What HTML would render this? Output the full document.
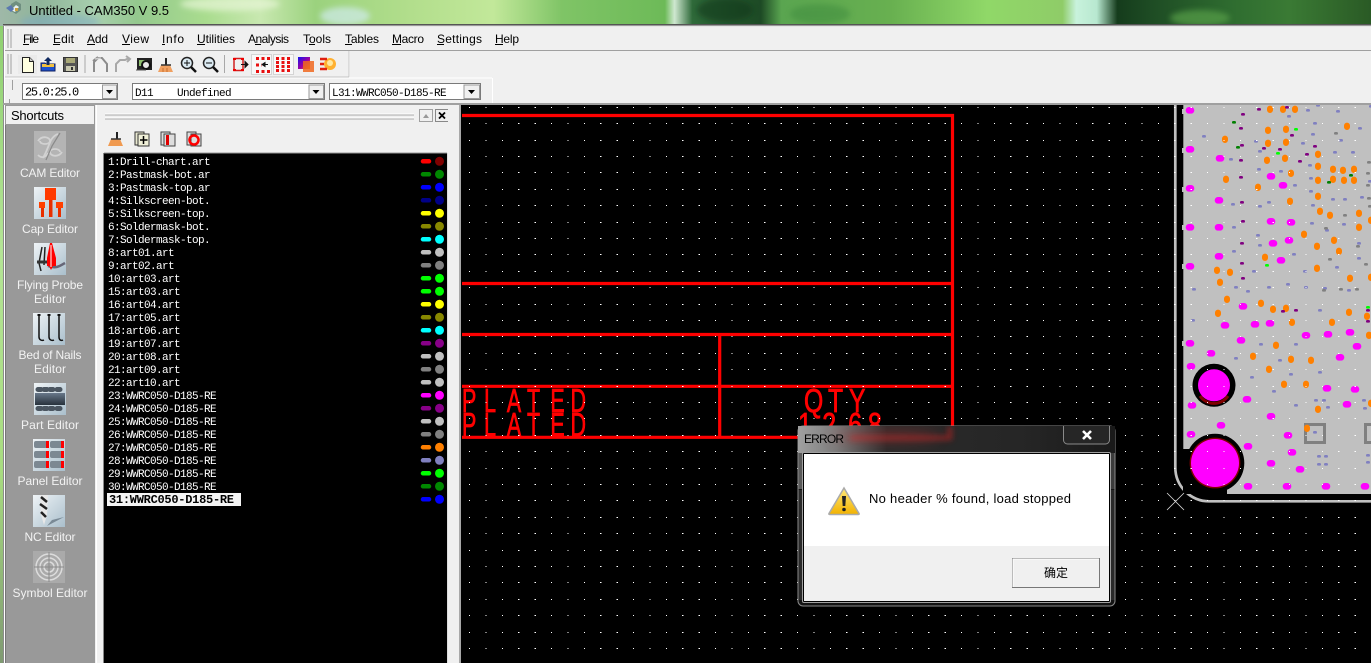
<!DOCTYPE html>
<html lang="en"><head><meta charset="utf-8"><title>Untitled - CAM350 V 9.5</title>
<style>
html,body{margin:0;padding:0;width:1371px;height:663px;overflow:hidden;background:#000}
svg{display:block}
text{font-family:"Liberation Sans","Noto Sans CJK SC",sans-serif;font-size:12px;fill:#000}
.m{font-size:12px}
.l{font-family:"Liberation Mono",monospace;font-size:11px;fill:#fff;letter-spacing:-.6px}
.c{font-family:"Liberation Mono",monospace;font-size:11px;fill:#000;letter-spacing:-.6px}
.s{fill:#f2f2f2;text-anchor:middle;font-size:12px}
.r{font-size:33px;fill:#f00;stroke:#f00;stroke-width:.8px}
</style></head><body>
<svg xmlns="http://www.w3.org/2000/svg" width="1371" height="663" viewBox="0 0 1371 663">
<defs>
<linearGradient id="wp" x1="0" x2="1" y1="0" y2="0">
<stop offset="0" stop-color="#9fb8a8"/><stop offset=".03" stop-color="#8fb59a"/><stop offset=".07" stop-color="#a8cfae"/><stop offset=".1" stop-color="#94c88e"/><stop offset=".15" stop-color="#a9dc8e"/><stop offset=".19" stop-color="#c8e8b0"/><stop offset=".23" stop-color="#9bd27e"/><stop offset=".3" stop-color="#b2de8c"/><stop offset=".36" stop-color="#c2e89a"/><stop offset=".41" stop-color="#7fc466"/><stop offset=".485" stop-color="#6dba58"/><stop offset=".492" stop-color="#cfe8d0"/><stop offset=".505" stop-color="#2f6a3a"/><stop offset=".555" stop-color="#1d4a25"/><stop offset=".57" stop-color="#5aa550"/><stop offset=".65" stop-color="#68b050"/><stop offset=".72" stop-color="#90d868"/><stop offset=".775" stop-color="#8fcc68"/><stop offset=".785" stop-color="#c8f2dc"/><stop offset=".8" stop-color="#b8e8d0"/><stop offset=".815" stop-color="#153c1c"/><stop offset=".84" stop-color="#1e4c24"/><stop offset=".9" stop-color="#2f6d30"/><stop offset=".94" stop-color="#3a7a34"/><stop offset="1" stop-color="#2a5a25"/>
</linearGradient>
<linearGradient id="ls" x1="0" x2="0" y1="0" y2="1"><stop offset="0" stop-color="#8fd070"/><stop offset=".35" stop-color="#b4e496"/><stop offset=".7" stop-color="#a8dc80"/><stop offset="1" stop-color="#7f9a72"/></linearGradient>
<linearGradient id="ic" x1="0" x2="1" y1="0" y2="1"><stop offset="0" stop-color="#eef3f6"/><stop offset="1" stop-color="#aabfcc"/></linearGradient>
<linearGradient id="gl" x1="0" x2="1" y1="0" y2="0"><stop offset="0" stop-color="#a0a0a0"/><stop offset=".12" stop-color="#7c7c7c"/><stop offset=".28" stop-color="#2a2a2a"/><stop offset=".7" stop-color="#262626"/><stop offset="1" stop-color="#1a1a1a"/></linearGradient>
<linearGradient id="yl" x1="0" x2="0" y1="0" y2="1"><stop offset="0" stop-color="#ffe97a"/><stop offset="1" stop-color="#f2b200"/></linearGradient>
<linearGradient id="gr" x1="0" x2="1" y1="0" y2="1"><stop offset="0" stop-color="#1010f0"/><stop offset=".55" stop-color="#a000a0"/><stop offset="1" stop-color="#ff8000"/></linearGradient>
<linearGradient id="dr" x1="0" x2="0" y1="0" y2="1"><stop offset="0" stop-color="#68788a"/><stop offset="1" stop-color="#28323c"/></linearGradient>
<filter id="b4" x="-20%" y="-100%" width="140%" height="300%"><feGaussianBlur stdDeviation="3"/></filter>
<filter id="b9" x="-30%" y="-100%" width="160%" height="300%"><feGaussianBlur stdDeviation="7"/></filter>
<clipPath id="top"><rect x="0" y="0" width="1371" height="25"/></clipPath>
<clipPath id="cv"><rect x="461" y="105" width="910" height="558"/></clipPath>
<clipPath id="pl"><rect x="462" y="388" width="300" height="49"/></clipPath>
<clipPath id="gc"><rect x="798" y="426" width="317" height="27"/></clipPath>
</defs>

<!-- wallpaper + title -->
<rect width="1371" height="26" fill="url(#wp)"/>
<g clip-path="url(#top)">
<ellipse cx="60" cy="22" rx="40" ry="8" fill="#7aa8c8" opacity=".45" filter="url(#b4)"/>
<ellipse cx="230" cy="4" rx="50" ry="7" fill="#e8f6d8" opacity=".7" filter="url(#b4)"/>
<ellipse cx="345" cy="16" rx="25" ry="9" fill="#d8efff" opacity=".6" filter="url(#b4)"/>
<ellipse cx="725" cy="10" rx="28" ry="12" fill="#0f3018" opacity=".5" filter="url(#b4)"/>
<ellipse cx="820" cy="14" rx="30" ry="10" fill="#3d8a3c" opacity=".5" filter="url(#b4)"/>
<ellipse cx="1200" cy="18" rx="30" ry="8" fill="#58a048" opacity=".7" filter="url(#b4)"/>
</g>
<g><path d="M11 4l5-3 5 3 0 6-5 4-5-3z" fill="#6f8f80"/><path d="M11 10l5-5 3 2-4 5z" fill="#e8f0f0"/><path d="M6 8l5-3 3 4-3 3z" fill="#5a78b0"/><rect x="15" y="8" width="3" height="3" fill="#c8a040"/></g>
<text x="29" y="15" style="font-size:13px" fill="#111" textLength="140">Untitled - CAM350 V 9.5</text>

<!-- window -->
<rect x="0" y="26" width="3.5" height="637" fill="url(#ls)"/>
<rect x="3" y="25" width="1368" height="638" fill="#f0f0f0"/>
<rect x="3" y="24" width="1368" height="1.5" fill="#555"/>
<rect x="3" y="25.5" width="1368" height="1" fill="#ddd"/>
<rect x="3" y="26" width="1" height="637" fill="#8c8c8c"/>
<rect x="4" y="26" width="1" height="637" fill="#fff"/>
<rect x="5" y="50" width="1366" height="1" fill="#a0a0a0"/>
<!-- grips -->
<path d="M8 29v19M11 29v19M8 54v20M11 54v20" stroke="#a0a0a0" stroke-width="1"/>
<path d="M12.5 80v10M9.5 99v5" stroke="#a0a0a0" stroke-width="1"/>
<path d="M5 77.5h344M349.5 51v26M5 78h487M492.5 78v25" stroke="#fff" stroke-width="1" fill="none"/>
<path d="M349 51v26M5 77h344" stroke="#b4b4b4" stroke-width=".7" fill="none"/>

<!-- menu -->
<g class="m">
<text x="23" y="43" textLength="16">File</text><text x="53" y="43" textLength="21">Edit</text><text x="87" y="43" textLength="21">Add</text><text x="122" y="43" textLength="27">View</text><text x="162" y="43" textLength="22">Info</text><text x="197" y="43" textLength="38">Utilities</text><text x="248" y="43" textLength="41">Analysis</text><text x="303" y="43" textLength="28">Tools</text><text x="345" y="43" textLength="34">Tables</text><text x="392" y="43" textLength="32">Macro</text><text x="437" y="43" textLength="45">Settings</text><text x="495" y="43" textLength="24">Help</text>
</g>
<path d="M23 44.5h6M53 44.5h7M87 44.5h8M122 44.5h8M162 44.5h3M197 44.5h8M255 44.5h6M309 44.5h6M345 44.5h7M392 44.5h9M437 44.5h7M495 44.5h8" stroke="#000" stroke-width="1"/>

<!-- toolbar -->
<path d="M85 55v18M224.500 55v18" stroke="#a8a8a8"/>
<rect x="18" y="55" width="19" height="19" fill="#e6e6e6" opacity=".6"/>
<path d="M22.500 57.500h7l4 4v11h-11z" fill="#ffffe0" stroke="#222"/><path d="M29.500 57.500v4h4" fill="#ccc" stroke="#222"/>
<path d="M41 71v-8h4l1 1h9v7z" fill="#1a50d0" stroke="#102060"/><path d="M42 64h12v3H42z" fill="#f0c040"/><path d="M48 57l4 4h-2.500v4h-3v-4H44z" fill="#102a60"/>
<rect x="63.500" y="57.500" width="14" height="14" fill="#555" stroke="#333"/><rect x="66" y="58" width="9" height="5" fill="#a8a878"/><rect x="66" y="66" width="9" height="5" fill="#c8c8b0"/><rect x="71" y="67" width="2" height="3" fill="#333"/>
<path d="M94 72V62l4-4h4l5 6v8M93 61l5-4" fill="none" stroke="#8c8c8c" stroke-width="2"/><path d="M95 59l6-1" stroke="#ccc" stroke-width="1.500"/>
<path d="M116 72V64l4-4h5l4-2M126 56l4 3-3 3" fill="none" stroke="#a8a8a8" stroke-width="2"/>
<rect x="137" y="58" width="15" height="12" fill="#222"/><path d="M139 60h8v6h-8z" fill="#8fc070"/><circle cx="146" cy="65" r="4" fill="#e8e8e8" stroke="#111" stroke-width="2"/><path d="M136 70h10" stroke="#555"/>
<path d="M158 72l3-7h9l3 7z" fill="#f0a060"/><path d="M165 58h2v7h-2z" fill="#222"/><path d="M161 65h10" stroke="#333" stroke-width="1.500"/><path d="M163 68v4M167 68v4" stroke="#c87030"/>
<circle cx="187" cy="63" r="5.500" fill="#dcebf3" stroke="#222" stroke-width="1.500"/><path d="M184 63h6M187 60v6" stroke="#111"/><path d="M191 67l5 5" stroke="#111" stroke-width="2.500"/>
<circle cx="209" cy="63" r="5.500" fill="#dcebf3" stroke="#222" stroke-width="1.500"/><path d="M206 63h6" stroke="#111"/><path d="M213 67l5 5" stroke="#111" stroke-width="2.500"/>
<rect x="234" y="58.500" width="9" height="12" fill="none" stroke="#d02020" stroke-width="1.500"/><path d="M233 58h3v2h-3zM241 58h3v2h-3zM233 69h3v2h-3zM241 69h3v2h-3z" fill="#e00"/><path d="M241 64.500h6M248 64.500l-3-3v6z" stroke="#111" fill="#111"/>
<rect x="251.500" y="54.500" width="20" height="20" fill="#f8f8f8" stroke="#d4d4d4"/><rect x="273.500" y="54.500" width="20" height="20" fill="#f8f8f8" stroke="#d4d4d4"/>
<path d="M256 58.500h14M256 71.500h14M256 65h6M276 58.500h15M276 62.500h15M276 66.500h15M276 70.500h15" stroke="#e81010" stroke-width="3" stroke-dasharray="3 2.500"/>
<path d="M262 64.500h6M262 64.500l3-2v4z" stroke="#111" fill="#111"/>
<rect x="298" y="57" width="12" height="12" fill="url(#gr)"/><rect x="303" y="61" width="11" height="11" fill="#f06820" opacity=".85"/>
<circle cx="330" cy="64" r="6" fill="#ffb030"/><circle cx="330" cy="63" r="3" fill="#ffe8a0"/><path d="M320 59h7M320 69h7M320 64h4" stroke="#e02010" stroke-width="2.500"/>

<!-- combos -->
<g stroke="#7a7a7a" fill="#fff"><rect x="22.500" y="83.500" width="95" height="16"/><rect x="132.500" y="83.500" width="192" height="16"/><rect x="329.500" y="83.500" width="151" height="16"/></g>
<g fill="#f0f0f0" stroke="#9a9a9a"><rect x="102.500" y="85" width="14" height="13.500"/><rect x="309" y="85" width="14.500" height="13.500"/><rect x="464" y="85" width="15.500" height="13.500"/></g>
<path d="M106 90h7l-3.500 4zM312.500 90h7l-3.500 4zM468 90h7l-3.500 4z" fill="#000"/>
<text class="c" x="25" y="95.500" style="font-size:12px;letter-spacing:-.2px" textLength="54">25.0:25.0</text>
<text class="c" x="135" y="96" xml:space="preserve">D11    Undefined</text>
<text class="c" x="332" y="96">L31:WWRC050-D185-RE</text>
<rect x="3" y="103" width="1368" height="2" fill="#a0a0a0"/>

<!-- shortcuts -->
<rect x="5" y="105" width="90" height="558" fill="#999"/>
<rect x="5" y="124" width="1" height="539" fill="#777"/>
<rect x="5.500" y="105.500" width="89" height="19" fill="#f0f0f0" stroke="#999"/>
<text x="11" y="120" style="font-size:13px" textLength="53">Shortcuts</text>
<rect x="95" y="105" width="9" height="558" fill="#f0f0f0"/>
<rect x="96" y="105" width="1" height="558" fill="#fff"/>

<!-- CAM Editor icon -->
<rect x="34" y="131" width="32" height="32" fill="#b4b4b4"/>
<path d="M38 141c4-6 12-4 12 0s-10 4-10 0M62 152c-4 6-12 4-12 0s10-4 10 0M38 155c4 4 8 2 10-2M58 134c-3 1-5 3-7 6l-5 12-3 6" fill="none" stroke="#d2d2d2" stroke-width="1.800"/>
<path d="M60 133l-8 13-6 14" stroke="#8a8a8a" stroke-width="1.200" fill="none"/>
<text class="s" x="50" y="177" textLength="60">CAM Editor</text>
<!-- Cap -->
<rect x="34" y="187" width="32" height="32" fill="url(#ic)"/>
<path d="M49 200h3.500v17H49zM41 207h3v10h-3zM58 207h3v10h-3z" fill="#e83000"/>
<rect x="45" y="188" width="11" height="12" fill="#ff3a00"/><rect x="39" y="202" width="6" height="6" fill="#ff4000"/><rect x="56" y="202" width="7" height="6" fill="#ff4000"/>
<text class="s" x="50" y="233" textLength="56">Cap Editor</text>
<!-- Flying probe -->
<rect x="34" y="243" width="32" height="32" fill="url(#ic)"/>
<path d="M42 247l-3 16 2 8M45 247l-1 18" stroke="#222" stroke-width="1.500" fill="none"/>
<path d="M37 262h13" stroke="#333" stroke-width="3"/>
<path d="M48 266c8 3 12 0 17-3" stroke="#667" stroke-width="2.500" fill="none"/>
<path d="M50 243h2l4 15v8h-3l-2 4-2-4h-2v-8z" fill="#f00"/><path d="M51 245v22" stroke="#fff"/>
<text class="s" x="50" y="289" textLength="66">Flying Probe</text><text class="s" x="50" y="303" textLength="32">Editor</text>
<!-- Bed of nails -->
<rect x="33" y="313" width="32" height="32" fill="url(#ic)"/>
<path d="M39 315v22c0 3 3 4 5 3M49 315v22c0 3 3 4 5 3M59 315v22c0 3 2 4 4 3" fill="none" stroke="#111" stroke-width="1.500"/>
<path d="M39 314v2M49 314v2M59 314v2" stroke="#111" stroke-width="3"/>
<text class="s" x="50" y="359" textLength="63">Bed of Nails</text><text class="s" x="50" y="373" textLength="32">Editor</text>
<!-- Part -->
<rect x="34" y="383" width="32" height="32" fill="url(#ic)"/>
<rect x="35" y="393" width="30" height="12" fill="url(#dr)"/>
<path d="M38 389.500h3M44 389.500h3M50 389.500h3M57 389.500h3M38 408.500h3M44 408.500h3M50 408.500h3M57 408.500h3" stroke="#4a5560" stroke-width="5" stroke-linecap="round"/>
<text class="s" x="50" y="429" textLength="58">Part Editor</text>
<!-- Panel -->
<rect x="33" y="439" width="32" height="32" fill="url(#ic)"/>
<g fill="#7c8892"><rect x="34" y="441" width="13" height="7" rx="2"/><rect x="50" y="441" width="13" height="7" rx="2"/><rect x="34" y="451" width="13" height="7" rx="2"/><rect x="50" y="451" width="13" height="7" rx="2"/><rect x="34" y="461" width="13" height="7" rx="2"/><rect x="50" y="461" width="13" height="7" rx="2"/></g>
<g fill="#f00"><rect x="46" y="441" width="3" height="7"/><rect x="61" y="441" width="3" height="7"/><rect x="46" y="451" width="3" height="7"/><rect x="61" y="451" width="3" height="7"/><rect x="46" y="461" width="3" height="7"/><rect x="61" y="461" width="3" height="7"/></g>
<text class="s" x="50" y="485" textLength="65">Panel Editor</text>
<!-- NC -->
<rect x="33" y="495" width="32" height="32" fill="url(#ic)"/>
<path d="M40 495h8l-1 20-3 10-3-10z" fill="#e8e8e8"/>
<path d="M41 497l6 5M40 504l7 5M41 512l5 5" stroke="#222" stroke-width="2.500"/>
<path d="M47 526l17-9-12 3z" fill="#7a8a96"/>
<text class="s" x="50" y="541" textLength="51">NC Editor</text>
<!-- Symbol -->
<rect x="33" y="551" width="32" height="32" fill="#aaa"/>
<g fill="none" stroke="#dcdcdc" stroke-width="1.500"><circle cx="49" cy="567" r="13"/><circle cx="49" cy="567" r="9"/><circle cx="49" cy="567" r="5"/></g>
<path d="M49 552v30M34 567h30" stroke="#8a8a8a"/>
<text class="s" x="50" y="597" textLength="75">Symbol Editor</text>

<!-- layer panel -->
<path d="M105 115h309M105 119h309" stroke="#a8a8a8"/><path d="M105 114h309M105 118h309" stroke="#fff"/>
<rect x="419.500" y="109.500" width="13" height="12" fill="#f0f0f0" stroke="#a0a0a0"/><path d="M423 118h6l-3-4z" fill="#999"/>
<rect x="435.500" y="109.500" width="13" height="12" fill="#f0f0f0" stroke="#888"/><path d="M439 112.500l6 6M445 112.500l-6 6" stroke="#000" stroke-width="1.800"/>
<!-- panel icons -->
<path d="M108 146l3-7h9l3 7z" fill="#f09a50"/><path d="M116 132h2v7h-2z" fill="#222"/><path d="M111 139h10" stroke="#333" stroke-width="1.500"/>
<rect x="135" y="132" width="9" height="13" fill="#e8e8d0" stroke="#333"/><rect x="138" y="134" width="11" height="12" fill="#f0f0d8" stroke="#333"/><path d="M143.500 136v8M140 140h7.500" stroke="#000" stroke-width="1.500"/>
<rect x="161" y="132" width="9" height="13" fill="#ddd" stroke="#444"/><rect x="164" y="134" width="11" height="12" fill="#ddd" stroke="#444"/><rect x="166" y="135" width="3" height="10" fill="#e00000"/>
<rect x="187" y="132" width="9" height="13" fill="#ddd" stroke="#444"/><rect x="191" y="134" width="10" height="12" fill="#ddd" stroke="#444"/><circle cx="194" cy="140" r="4.500" fill="none" stroke="#f00" stroke-width="2.500"/>

<!-- list -->
<rect x="104" y="153" width="343" height="510" fill="#000"/>
<path d="M104 153h343" stroke="#999"/><rect x="447" y="153" width="1" height="510" fill="#ddd"/>
<rect x="103" y="153" width="1" height="510" fill="#888"/>
<g>
<text class="l" x="108" y="165">1:Drill-chart.art</text>
<text class="l" x="108" y="178">2:Pastmask-bot.ar</text>
<text class="l" x="108" y="191">3:Pastmask-top.ar</text>
<text class="l" x="108" y="204">4:Silkscreen-bot.</text>
<text class="l" x="108" y="217">5:Silkscreen-top.</text>
<text class="l" x="108" y="230">6:Soldermask-bot.</text>
<text class="l" x="108" y="243">7:Soldermask-top.</text>
<text class="l" x="108" y="256">8:art01.art</text>
<text class="l" x="108" y="269">9:art02.art</text>
<text class="l" x="108" y="282">10:art03.art</text>
<text class="l" x="108" y="295">15:art03.art</text>
<text class="l" x="108" y="308">16:art04.art</text>
<text class="l" x="108" y="321">17:art05.art</text>
<text class="l" x="108" y="334">18:art06.art</text>
<text class="l" x="108" y="347">19:art07.art</text>
<text class="l" x="108" y="360">20:art08.art</text>
<text class="l" x="108" y="373">21:art09.art</text>
<text class="l" x="108" y="386">22:art10.art</text>
<text class="l" x="108" y="399">23:WWRC050-D185-RE</text>
<text class="l" x="108" y="412">24:WWRC050-D185-RE</text>
<text class="l" x="108" y="425">25:WWRC050-D185-RE</text>
<text class="l" x="108" y="438">26:WWRC050-D185-RE</text>
<text class="l" x="108" y="451">27:WWRC050-D185-RE</text>
<text class="l" x="108" y="464">28:WWRC050-D185-RE</text>
<text class="l" x="108" y="477">29:WWRC050-D185-RE</text>
<text class="l" x="108" y="490">30:WWRC050-D185-RE</text>
</g>
<rect x="107" y="493" width="134" height="13" fill="#f4f4f4"/>
<text x="109" y="503" style="font-family:'Liberation Mono',monospace;font-size:12px;font-weight:bold" textLength="125">31:WWRC050-D185-RE</text>
<!-- swatches: pill + dot -->
<g fill="none" stroke-linecap="round" stroke-width="4.500">
<path d="M423 161.300h6" stroke="#f00"/><path d="M423 174.300h6" stroke="#080"/><path d="M423 187.300h6" stroke="#00f"/><path d="M423 200.300h6" stroke="#008"/><path d="M423 213.300h6" stroke="#ff0"/><path d="M423 226.300h6" stroke="#880"/><path d="M423 239.300h6" stroke="#0ff"/><path d="M423 252.300h6" stroke="#c0c0c0"/><path d="M423 265.300h6" stroke="#808080"/><path d="M423 278.300h6" stroke="#0f0"/><path d="M423 291.300h6" stroke="#0f0"/><path d="M423 304.300h6" stroke="#ff0"/><path d="M423 317.300h6" stroke="#880"/><path d="M423 330.300h6" stroke="#0ff"/><path d="M423 343.300h6" stroke="#808"/><path d="M423 356.300h6" stroke="#c0c0c0"/><path d="M423 369.300h6" stroke="#808080"/><path d="M423 382.300h6" stroke="#c0c0c0"/><path d="M423 395.300h6" stroke="#f0f"/><path d="M423 408.300h6" stroke="#808"/><path d="M423 421.300h6" stroke="#c0c0c0"/><path d="M423 434.300h6" stroke="#808080"/><path d="M423 447.300h6" stroke="#ff8000"/><path d="M423 460.300h6" stroke="#8080c0"/><path d="M423 473.300h6" stroke="#0f0"/><path d="M423 486.300h6" stroke="#080"/><path d="M423 499.300h6" stroke="#00f"/>
</g>
<g>
<circle cx="439.500" cy="161.300" r="4.500" fill="#800000"/><circle cx="439.500" cy="174.300" r="4.500" fill="#080"/><circle cx="439.500" cy="187.300" r="4.500" fill="#00f"/><circle cx="439.500" cy="200.300" r="4.500" fill="#008"/><circle cx="439.500" cy="213.300" r="4.500" fill="#ff0"/><circle cx="439.500" cy="226.300" r="4.500" fill="#880"/><circle cx="439.500" cy="239.300" r="4.500" fill="#0ff"/><circle cx="439.500" cy="252.300" r="4.500" fill="#c0c0c0"/><circle cx="439.500" cy="265.300" r="4.500" fill="#808080"/><circle cx="439.500" cy="278.300" r="4.500" fill="#0f0"/><circle cx="439.500" cy="291.300" r="4.500" fill="#0f0"/><circle cx="439.500" cy="304.300" r="4.500" fill="#ff0"/><circle cx="439.500" cy="317.300" r="4.500" fill="#880"/><circle cx="439.500" cy="330.300" r="4.500" fill="#0ff"/><circle cx="439.500" cy="343.300" r="4.500" fill="#808"/><circle cx="439.500" cy="356.300" r="4.500" fill="#c0c0c0"/><circle cx="439.500" cy="369.300" r="4.500" fill="#808080"/><circle cx="439.500" cy="382.300" r="4.500" fill="#c0c0c0"/><circle cx="439.500" cy="395.300" r="4.500" fill="#f0f"/><circle cx="439.500" cy="408.300" r="4.500" fill="#808"/><circle cx="439.500" cy="421.300" r="4.500" fill="#c0c0c0"/><circle cx="439.500" cy="434.300" r="4.500" fill="#808080"/><circle cx="439.500" cy="447.300" r="4.500" fill="#ff8000"/><circle cx="439.500" cy="460.300" r="4.500" fill="#8080c0"/><circle cx="439.500" cy="473.300" r="4.500" fill="#0f0"/><circle cx="439.500" cy="486.300" r="4.500" fill="#080"/><circle cx="439.500" cy="499.300" r="4.500" fill="#00f"/>
</g>
<rect x="448" y="105" width="12" height="558" fill="#f0f0f0"/>
<rect x="459" y="105" width="2" height="558" fill="#a8a8a8"/>

<!-- canvas -->
<g clip-path="url(#cv)">
<rect x="461" y="105" width="910" height="558" fill="#000"/>
<!-- board -->
<path d="M1175.300 105V467A34 34 0 0 0 1210 501.300H1371" fill="none" stroke="#c0c0c0" stroke-width="2.700"/>
<rect x="1183.300" y="105" width="188" height="389" fill="#c0c0c0"/>
<path d="M1182 109h2v5h-2zM1182 148h2v5h-2zM1182 187h2v5h-2zM1182 225h2v5h-2zM1182 264h2v5h-2zM1182 341h2v5h-2z" fill="#c0c0c0"/>
<path d="M1183 449h17v14h27v31h-44z" fill="#000"/>
<circle cx="1215" cy="463" r="29.300" fill="#000"/><circle cx="1215" cy="463" r="25.400" fill="#800000"/><circle cx="1215" cy="463" r="24" fill="#f0f"/>
<circle cx="1214" cy="385.300" r="21.500" fill="#000"/><path d="M1200 396a17 17 0 0 0 28 0" stroke="#800000" stroke-width="3" fill="none"/><circle cx="1214" cy="385.300" r="16" fill="#f0f"/>
<rect x="1305.500" y="424.500" width="19" height="18" fill="none" stroke="#808080" stroke-width="3"/>
<rect x="1365.500" y="424.500" width="19" height="18" fill="none" stroke="#808080" stroke-width="3"/>
<!-- pads from upper area -->
<g transform="translate(1170 100) scale(.33333)" fill="none" stroke-linecap="round">
<path stroke="#f0f" stroke-width="20" d="M57 31h6M57 148h6M57 265h6M57 382h6M57 499h6M147 175h6M300 229h6M336 256h6M144 301h6M300 364h6M360 367h6M144 382h6M306 430h6M354 421h6M144 469h6M330 481h6"/>
<path stroke="#ff8000" stroke-width="18" d="M300 26v4M339 26v4M375 26v4M531 77v4M294 89v4M348 86v4M165 116v4M294 128v4M348 125v4M444 161v4M291 179v4M345 173v4M444 197v4M489 206v4M519 209v4M552 206v4M363 218v4M168 236v4M444 239v4M489 236v4M522 239v4M552 239v4M264 260v4M444 287v4M360 302v4M450 332v4M480 344v4M567 338v4M603 359v4M567 380v4M402 401v4M492 419v4M441 437v4M507 452v4M285 470v4M441 503v4M141 509v4M180 515v4M540 533v4M603 530v4M150 545v4M171 596v4"/>
<path stroke="#800080" stroke-width="8" d="M217 43h4M265 28h4M349 22h4M211 85h4M364 106h4M214 136h4M280 145h4M328 148h4M433 139h4M409 163h4M211 181h4M388 184h4M211 232h4M214 307h4M217 364h4M214 430h4M214 490h4M217 535h4"/>
<path stroke="#8080c0" stroke-width="8" d="M442 16h4M412 31h4M502 34h4M601 19h4M355 49h4M433 70h4M568 85h4M100 109h4M427 103h4M511 121h4M256 124h4M397 130h4M268 154h4M493 157h4M547 157h4M181 178h4M418 196h4M265 208h4M331 214h4M421 235h4M598 244h4M373 256h4M421 274h4M574 292h4M487 298h4M523 298h4M187 313h4M295 307h4M268 319h4M427 316h4M424 370h4M520 373h4M190 382h4M469 391h4M262 406h4M268 436h4M565 430h4M190 454h4M370 463h4M565 475h4M499 502h4M250 514h4M403 514h4M70 568h4M196 562h4M295 562h4M352 553h4M406 562h4M463 565h4M535 571h4M232 574h4"/>
<path stroke="#808080" stroke-width="8" d="M496 100h4M595 187h4M592 220h4M592 256h4M595 295h4M598 319h4M523 346h4M466 385h4M562 439h4M478 478h4M586 493h4M460 571h4M511 568h4M559 568h4"/>
<path stroke="#0f0" stroke-width="8" d="M376 88h4M322 160h4M289 496h4"/>
<path stroke="#008000" stroke-width="8" d="M190 67h4M202 142h4M541 226h4M475 247h4"/>
</g>
<!-- pads from lower area -->
<g transform="translate(1160 300) scale(.33333)" fill="none" stroke-linecap="round">
<path stroke="#f0f" stroke-width="20" d="M246 19h6M192 76h6M282 73h6M327 70h6M435 106h6M501 103h6M567 97h6M87 130h6M240 121h6M150 160h6M588 139h6M537 172h6M90 199h6M498 265h6M582 268h6M258 298h6M93 316h6M558 313h6M330 349h6M180 376h6M90 403h6M381 406h6M261 439h6M393 457h6M330 490h6M417 508h6M261 559h6M378 559h6M495 559h6M612 559h6"/>
<path stroke="#ff8000" stroke-width="18" d="M303 8v4M174 38v4M339 26v4M378 23v4M567 35v4M621 47v4M396 65v4M516 65v4M627 104v4M348 134v4M279 167v4M393 176v4M453 179v4M327 206v4M372 251v4M438 251v4M474 326v4M633 308v4M441 383v4"/>
<path stroke="#800080" stroke-width="8" d="M406 31h4M367 34h4M622 31h4M622 64h4"/>
<path stroke="#8080c0" stroke-width="8" d="M478 31h4M97 61h4M301 133h4M406 133h4M226 175h4M358 181h4M391 223h4M478 217h4M274 232h4M340 274h4M466 301h4M490 301h4M610 301h4M406 316h4M502 322h4M613 325h4M463 397h4M475 469h4M496 469h4M622 466h4M475 493h4M496 493h4M622 487h4"/>
<path stroke="#0f0" stroke-width="8" d="M622 22h4"/>
</g>
<!-- red drawing -->
<g stroke="#f00" stroke-width="3.200" fill="none">
<path d="M462 115.500H952.500V440M462 283.500H952.500M462 334.500H952.500M462 386.300H952.500M462 437.300H800M719.700 334.500V437"/>
</g>
<g clip-path="url(#pl)">
<text class="r" transform="translate(462 412) scale(.65 1)" x="0 34 69 100 136 167">PLATED</text>
<text class="r" transform="translate(462 436) scale(.65 1)" x="0 34 69 100 136 167">PLATED</text>
</g>
<text class="r" transform="translate(804 412) scale(.75 1)" x="0 32 60">QTY</text>
<text class="r" transform="translate(798 436) scale(.76 1)" x="0 32 66 92">1268</text>
<!-- grid dots -->
<path fill="none" stroke="#fff" stroke-width="1" stroke-dasharray="1.200 15.200" shape-rendering="crispEdges" d="M469 107.500H1371M469 123.500H1371M469 140.500H1371M469 156.500H1371M469 172.500H1371M469 189.500H1371M469 205.500H1371M469 222.500H1371M469 238.500H1371M469 254.500H1371M469 271.500H1371M469 287.500H1371M469 304.500H1371M469 320.500H1371M469 336.500H1371M469 353.500H1371M469 369.500H1371M469 386.500H1371M469 402.500H1371M469 418.500H1371M469 435.500H1371M469 451.500H1371M469 468.500H1371M469 484.500H1371M469 500.500H1371M469 517.500H1371M469 533.500H1371M469 550.500H1371M469 566.500H1371M469 582.500H1371M469 599.500H1371M469 615.500H1371M469 632.500H1371M469 648.500H1371"/>
<path d="M1167 493l17 17M1184 493l-17 17" stroke="#d8d8d8" stroke-width=".8"/>
</g>

<!-- dialog -->
<rect x="798" y="426" width="317" height="180" rx="5" fill="#141414" stroke="#8a8a8a"/>
<g clip-path="url(#gc)">
<rect x="798" y="426" width="317" height="27" fill="url(#gl)"/>
<path d="M850 438H950V426" stroke="#e02020" stroke-width="4" fill="none" filter="url(#b4)" opacity=".55"/>
<ellipse cx="885" cy="436" rx="55" ry="6" fill="#b03030" opacity=".4" filter="url(#b9)"/>
</g>
<rect x="798.500" y="453" width="5" height="36" fill="#5a5a5a"/>
<rect x="1110" y="453" width="4.500" height="36" fill="#3c3c3c"/>
<rect x="798.500" y="490" width="5" height="110" fill="#2a2a2a"/>
<rect x="1110" y="490" width="4.500" height="110" fill="#2a2a2a"/>
<path d="M1063.500 426v14a4 4 0 0 0 4 4h38a4 4 0 0 0 4-4v-14" fill="#262626" stroke="#8a8a8a"/>
<path d="M1083 431l8 8M1091 431l-8 8" stroke="#fff" stroke-width="2.600"/>
<text x="804" y="443" fill="#1a1a1a" style="font-size:12px" textLength="40">ERROR</text>
<rect x="802.500" y="452.500" width="308" height="150" rx="1.500" fill="#000" stroke="#a0a0a0"/>
<rect x="804" y="454" width="305" height="92" fill="#fff"/>
<rect x="804" y="546" width="305" height="55" fill="#f0f0f0"/>
<path d="M844 488l15 25.500q.500 1-1 1h-28q-1.500 0-1-1z" fill="url(#yl)" stroke="#aaa" stroke-width="1.500"/>
<path d="M842 496h4l-.700 10h-2.600z" fill="#222"/><circle cx="844" cy="509.500" r="1.800" fill="#222"/>
<text x="869" y="503" style="font-size:13px" fill="#111" textLength="202">No header % found, load stopped</text>
<rect x="1012.500" y="558.500" width="87" height="29" fill="#f0f0f0" stroke="#777"/>
<path d="M1013 587V559H1099" stroke="#fff" fill="none"/>
<text x="1056" y="577" text-anchor="middle" style="font-size:12px;font-family:'Noto Sans CJK SC',sans-serif">确定</text>
</svg>
</body></html>
